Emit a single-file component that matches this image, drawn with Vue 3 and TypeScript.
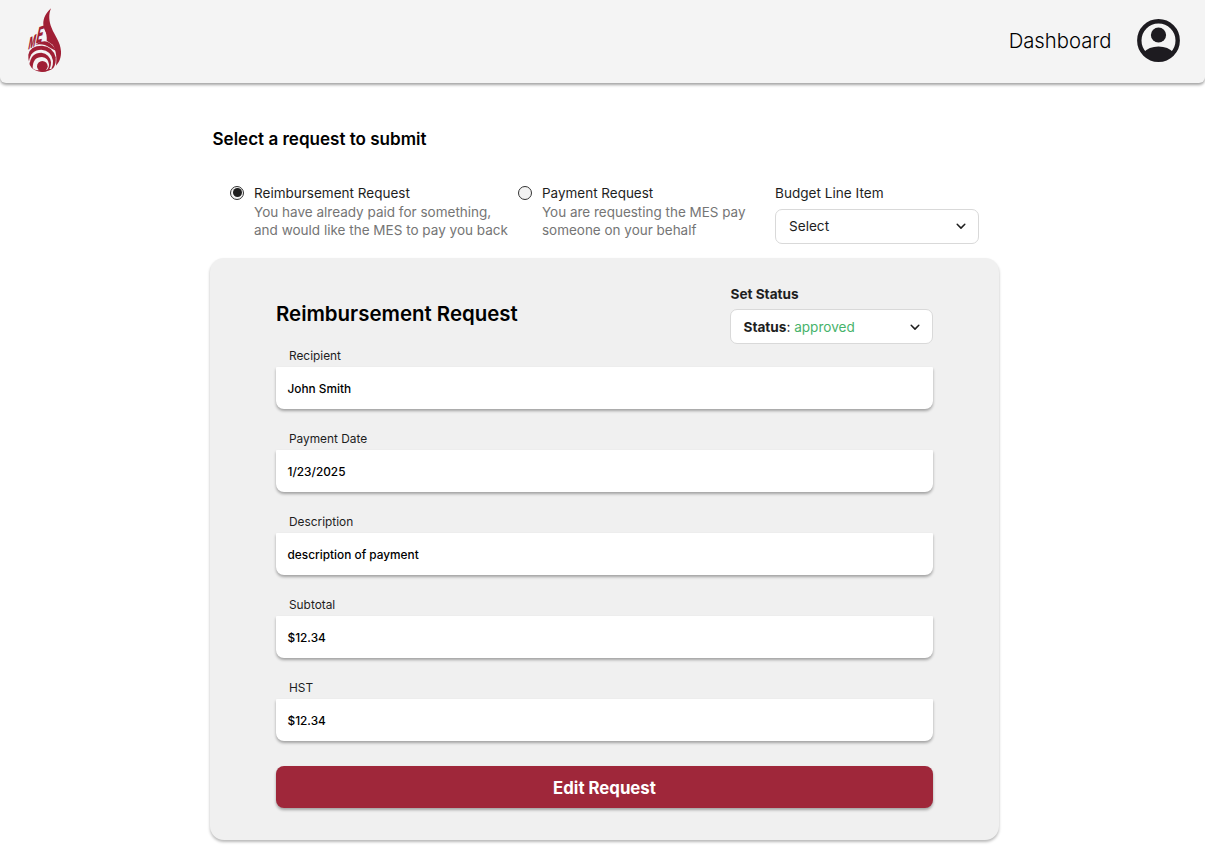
<script setup lang="ts">
import { ref } from 'vue'

interface Field {
  label: string
  value: string
}

interface RequestOption {
  id: string
  title: string
  lines: string[]
}

const options: RequestOption[] = [
  {
    id: 'reimbursement',
    title: 'Reimbursement Request',
    lines: ['You have already paid for something,', 'and would like the MES to pay you back'],
  },
  {
    id: 'payment',
    title: 'Payment Request',
    lines: ['You are requesting the MES pay', 'someone on your behalf'],
  },
]

const fields: Field[] = [
  { label: 'Recipient', value: 'John Smith' },
  { label: 'Payment Date', value: '1/23/2025' },
  { label: 'Description', value: 'description of payment' },
  { label: 'Subtotal', value: '$12.34' },
  { label: 'HST', value: '$12.34' },
]

const selected = ref('reimbursement')
</script>

<template>
  <div class="page">
    <header class="topbar">
      <svg class="logo" viewBox="81 24 108 195" aria-label="MES">
        <path
          d="M153 25C134 42 127 62 131 80C135 98 150 112 155 130C166 146 172 166 168 197C178 187 184 172 183 154C181 124 164 108 155 84C147 64 145 44 153 25Z"
          fill="#a01f35"
        />
        <path d="M133 84Q142 106 140 122L158 134L155 112Z" fill="#a01f35" />
        <path d="M106 134Q124 121 142 125Q160 132 167 152L150 143Q130 129 106 134Z" fill="#a01f35" />
        <path d="M85 164Q90 137 126 137Q158 139 167 172Q169 192 160 204Q150 214 127 215.5Q96 214 88 190Q84 176 85 164Z" fill="#a01f35" />
        <path d="M87 184Q92 149 124 149Q154 152 159 182Q160 196 154 207L140 207L96 203Q88 196 87 184Z" fill="#f4f4f4" />
        <path d="M89 194Q92 158 124 158Q149 161 153 187Q153 203 145 211Q136 215.5 127 215.5Q98 213 89 194Z" fill="#a01f35" />
        <path d="M98 205Q98 171 126 171Q145 174 147 193Q147 206 140 210L110 211Q102 210 98 205Z" fill="#f4f4f4" />
        <circle cx="127" cy="199" r="16" fill="#a01f35" />
        <text class="mark" transform="matrix(.7 -.4 -.3 1.6 83 150)">M</text>
        <text class="mark" transform="matrix(1 -.3 -.45 2.15 106 131)">E</text>
      </svg>
      <nav class="nav">
        <span class="nav-link">Dashboard</span>
        <svg class="avatar" viewBox="0 0 43 43">
          <circle cx="21.5" cy="21.5" r="19.2" fill="none" stroke="#1d1b20" stroke-width="4.4" />
          <circle cx="21.5" cy="16" r="7.6" fill="#1d1b20" />
          <path d="M6 34Q12 27.6 21.5 27.6Q31 27.6 37 34Q31 42 21.5 42Q12 42 6 34Z" fill="#1d1b20" />
        </svg>
      </nav>
    </header>

    <main class="content">
      <h1 class="title">Select a request to submit</h1>

      <section class="choices">
        <label v-for="o in options" :key="o.id" class="choice" :class="o.id" @click="selected = o.id">
          <span class="radio" :class="{ on: selected === o.id }"></span>
          <span class="choice-text">
            <span class="choice-title">{{ o.title }}</span>
            <span v-for="line in o.lines" :key="line" class="choice-line">{{ line }}</span>
          </span>
        </label>
        <div class="budget">
          <span class="budget-label">Budget Line Item</span>
          <button class="select" type="button">
            <span>Select</span>
            <svg class="chevron" viewBox="0 0 10 7"><path d="M1.2 1.3L5 5.1L8.8 1.3" /></svg>
          </button>
        </div>
      </section>

      <section class="card">
        <div class="card-head">
          <h2 class="card-title">Reimbursement Request</h2>
          <div class="status">
            <span class="status-label">Set Status</span>
            <button class="select" type="button">
              <span><b>Status</b>: <span class="approved">approved</span></span>
              <svg class="chevron" viewBox="0 0 10 7"><path d="M1.2 1.3L5 5.1L8.8 1.3" /></svg>
            </button>
          </div>
        </div>
        <div v-for="f in fields" :key="f.label" class="field">
          <span class="field-label">{{ f.label }}</span>
          <div class="field-value">{{ f.value }}</div>
        </div>
        <button class="edit" type="button">Edit Request</button>
      </section>
    </main>
  </div>
</template>

<style>
body {
  margin: 0;
  background: #fff;
}
</style>

<style scoped>
.page {
  height: 857px;
  overflow: hidden;
  background: #fff;
  color: #000;
  font-family: Inter, 'Liberation Sans', sans-serif;
}
.page * {
  box-sizing: border-box;
}
button {
  font-family: inherit;
  margin: 0;
}
.topbar {
  height: 83px;
  background: #f4f4f4;
  border-radius: 0 0 6px 6px;
  box-shadow: 0 2px 3px rgba(0, 0, 0, 0.36);
  display: flex;
  justify-content: space-between;
  padding: 8px 25px 0 27px;
}
.logo {
  width: 36px;
  height: 65px;
}
.mark {
  font-family: Inter, 'Liberation Sans', sans-serif;
  font-size: 32px;
  font-weight: 800;
  fill: #a01f35;
}
.nav {
  display: flex;
  align-items: center;
  height: 65px;
  gap: 25.5px;
}
.nav-link {
  font-size: 20.3px;
  font-weight: 300;
}
.avatar {
  width: 43px;
  height: 43px;
}
.content {
  width: 789.5px;
  margin-left: 209.5px;
}
.title {
  margin: 0;
  padding: 44px 0 0 3px;
  font-size: 17.05px;
  line-height: 24px;
  font-weight: 600;
}
.choices {
  display: flex;
  height: 74px;
  margin-top: 33px;
  padding-left: 20.5px;
}
.choice {
  display: flex;
  gap: 10px;
}
.choice.reimbursement {
  width: 288px;
}
.choice.payment {
  width: 257px;
}
.radio {
  width: 14px;
  height: 14px;
  margin-top: 1.5px;
  border: 1px solid #333;
  border-radius: 50%;
  background: #f3f3f3;
  flex: none;
  display: flex;
  align-items: center;
  justify-content: center;
}
.radio.on::after {
  content: '';
  width: 9px;
  height: 9px;
  border-radius: 50%;
  background: #1e1e1e;
  flex: none;
}
.choice-text {
  display: flex;
  flex-direction: column;
  font-size: 13.53px;
  line-height: 18.7px;
  white-space: nowrap;
}
.payment .choice-text {
  font-size: 13.48px;
}
.choice-title {
  color: #1e1e1e;
}
.choice-line {
  color: #757575;
}
.budget-label,
.status-label {
  display: block;
  font-size: 13.6px;
  line-height: 19px;
  color: #1e1e1e;
}
.select {
  width: 204px;
  height: 35px;
  padding: 0 12px 1px 13px;
  border: 1px solid #d9d9d9;
  border-radius: 7px;
  background: #fff;
  font-size: 13.6px;
  color: #1e1e1e;
  display: flex;
  align-items: center;
  justify-content: space-between;
}
.budget .select {
  margin-top: 6px;
}
.chevron {
  width: 10px;
  height: 7px;
  fill: none;
  stroke: #1e1e1e;
  stroke-width: 1.5;
  stroke-linecap: round;
  stroke-linejoin: round;
}
.card {
  height: 581.6px;
  background: #f0f0f0;
  border-radius: 14px;
  box-shadow: 0 2px 3px rgba(0, 0, 0, 0.28);
  padding: 26px 66px 0 66.5px;
}
.card-head {
  display: flex;
  justify-content: space-between;
  height: 57px;
}
.card-title {
  margin: 17px 0 0;
  font-size: 20.43px;
  line-height: 26px;
  font-weight: 600;
}
.status-label {
  padding-top: 1px;
  padding-left: 1px;
  font-weight: 700;
}
.status .select {
  margin-top: 5px;
  width: 203.5px;
  padding: 1px 12px 0 13px;
}
.approved {
  color: #47b36b;
}
.field {
  height: 83px;
  padding-top: 5.5px;
}
.field-label {
  display: block;
  padding-left: 13px;
  font-size: 11.87px;
  line-height: 19px;
  height: 19px;
  color: #1e1e1e;
}
.field-value {
  margin-top: 1.5px;
  height: 42px;
  padding: 1px 0 0 11.5px;
  background: #fff;
  border-radius: 1px 1px 8px 8px;
  box-shadow: 0 2px 3px rgba(0, 0, 0, 0.33);
  font-size: 11.85px;
  font-weight: 500;
  display: flex;
  align-items: center;
}
.edit {
  width: 100%;
  height: 42px;
  margin-top: 10px;
  padding-top: 2px;
  border: 0;
  border-radius: 8px;
  background: #9f273a;
  box-shadow: 0 2px 3px rgba(0, 0, 0, 0.33);
  color: #fff;
  font-size: 16.8px;
  font-weight: 700;
}
</style>
